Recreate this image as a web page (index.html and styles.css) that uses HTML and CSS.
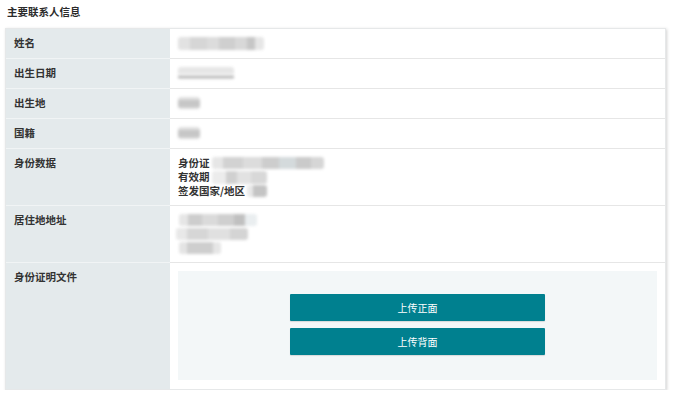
FILE: index.html
```html
<!DOCTYPE html>
<html lang="zh">
<head>
<meta charset="utf-8">
<link rel="stylesheet" href="styles.css">
</head>
<body>
<div class="title">主要联系人信息</div>
<div class="card">
  <div class="row">
    <div class="label">姓名</div>
    <div class="value"><span class="blur b-name"></span></div>
  </div>
  <div class="row">
    <div class="label">出生日期</div>
    <div class="value"><span class="blur b-date"></span></div>
  </div>
  <div class="row">
    <div class="label">出生地</div>
    <div class="value"><span class="blur b-short"></span></div>
  </div>
  <div class="row">
    <div class="label">国籍</div>
    <div class="value"><span class="blur b-short"></span></div>
  </div>
  <div class="row multi">
    <div class="label">身份数据</div>
    <div class="value">
      <div class="line">身份证 <span class="blur b-id"></span></div>
      <div class="line">有效期 <span class="blur b-exp"></span></div>
      <div class="line">签发国家/地区 <span class="blur b-country"></span></div>
    </div>
  </div>
  <div class="row multi">
    <div class="label">居住地地址</div>
    <div class="value">
      <div class="line"><span class="blur b-addr1"></span></div>
      <div class="line"><span class="blur b-addr2"></span></div>
      <div class="line"><span class="blur b-addr3"></span></div>
    </div>
  </div>
  <div class="row last">
    <div class="label">身份证明文件</div>
    <div class="value">
      <div class="upload">
        <button class="btn">上传正面</button>
        <button class="btn">上传背面</button>
      </div>
    </div>
  </div>
</div>
</body>
</html>
```
FILE: styles.css
```css
* { box-sizing: border-box; }
html, body { margin: 0; background: #fff; }
body {
  padding: 5px 8px 0 5px;
  font-family: "Noto Sans CJK SC", "Liberation Sans", sans-serif;
  font-size: 10.5px;
  color: #333;
}
.title {
  font-weight: bold;
  line-height: 14px;
  padding-left: 2px;
  margin-bottom: 9px;
  color: #2b2b2b;
}
.card {
  width: 661px;
  border: 1px solid #e6e8e9;
  box-shadow: 1px 1px 3px rgba(0,0,0,0.18);
  background: #fff;
}
.row {
  display: flex;
}
.label {
  width: 164px;
  flex: none;
  background: #e4eaec;
  font-weight: bold;
  padding: 7px 9px 8px 8px;
  line-height: 14px;
  border-bottom: 1px solid #f1f4f5;
}
.value {
  flex: 1;
  padding: 7px 8px 8px 8px;
  line-height: 14px;
  font-weight: bold;
  border-bottom: 1px solid #e6e6e6;
}
.row.multi .value { padding-bottom: 7px; }
.row.last .label, .row.last .value { border-bottom: none; }
.row.last .value { padding: 8px 8px 9px 8px; }
.line { height: 14px; white-space: nowrap; }
.blur {
  display: inline-block;
  vertical-align: middle;
  height: 12px;
  filter: blur(1.7px);
  margin-top: -2px;
  border-radius: 3px;
}
.b-name {
  width: 86px;
  height: 13px;
  background: linear-gradient(90deg, #e2e2e2 0 14%, #d6d6d6 14% 34%, #dcdcdc 34% 48%, #cfcfcf 48% 66%, #d8d8d8 66% 80%, #c6c6c6 80% 90%, #e6e6e6 90%);
}
.b-date {
  width: 56px;
  height: 13px;
  background: linear-gradient(180deg, #e6e6e6 0 55%, #fafafa 55% 68%, #a8a8a8 68% 85%, #f4f4f4 85%);
}
.b-short {
  width: 22px;
  background: linear-gradient(180deg, #e0e0e0 0 25%, #c6c6c6 25% 80%, #dadada 80%);
}
.b-id {
  width: 112px;
  background: linear-gradient(90deg, #e6e6e6 0 10%, #d2d2d2 10% 28%, #dcdcdc 28% 45%, #cdcdcd 45% 60%, #d4dadc 60% 75%, #cacaca 75% 88%, #d6d6d6 88%);
}
.b-exp {
  width: 55px;
  height: 13px;
  background: linear-gradient(90deg, #ececec 0 25%, #d0d0d0 25% 45%, #e2e2e2 45% 70%, #d8d8d8 70%);
}
.b-country {
  width: 20px;
  background: linear-gradient(90deg, #e8e8e8 0 30%, #c4c4c4 30%);
}
.b-addr1 {
  width: 78px;
  margin-left: 1px;
  background: linear-gradient(90deg, #e6e6e6 0 12%, #cdcdcd 12% 30%, #dadada 30% 50%, #cfcfcf 50% 70%, #c0c0c0 70% 85%, #eaeef0 85%);
}
.b-addr2 {
  width: 72px;
  margin-left: -2px;
  background: linear-gradient(90deg, #e8e8e8 0 15%, #d6d6d6 15% 45%, #e0e0e0 45% 75%, #d4d4d4 75%);
}
.b-addr3 {
  width: 42px;
  margin-left: 1px;
  background: linear-gradient(90deg, #e4e4e4 0 20%, #cecece 20% 80%, #e6e6e6 80%);
}
.upload {
  background: #f3f7f8;
  height: 109px;
  display: flex;
  flex-direction: column;
  align-items: center;
  padding-top: 23px;
  gap: 7px;
}
.btn {
  width: 255px;
  height: 27px;
  border: none;
  border-radius: 1px;
  background: #00808f;
  color: #fff;
  font-family: "Noto Sans CJK SC", "Liberation Sans", sans-serif;
  font-size: 10px;
  box-shadow: 0 1px 1px rgba(0,0,0,0.12);
  padding: 0;
  cursor: pointer;
}
```
